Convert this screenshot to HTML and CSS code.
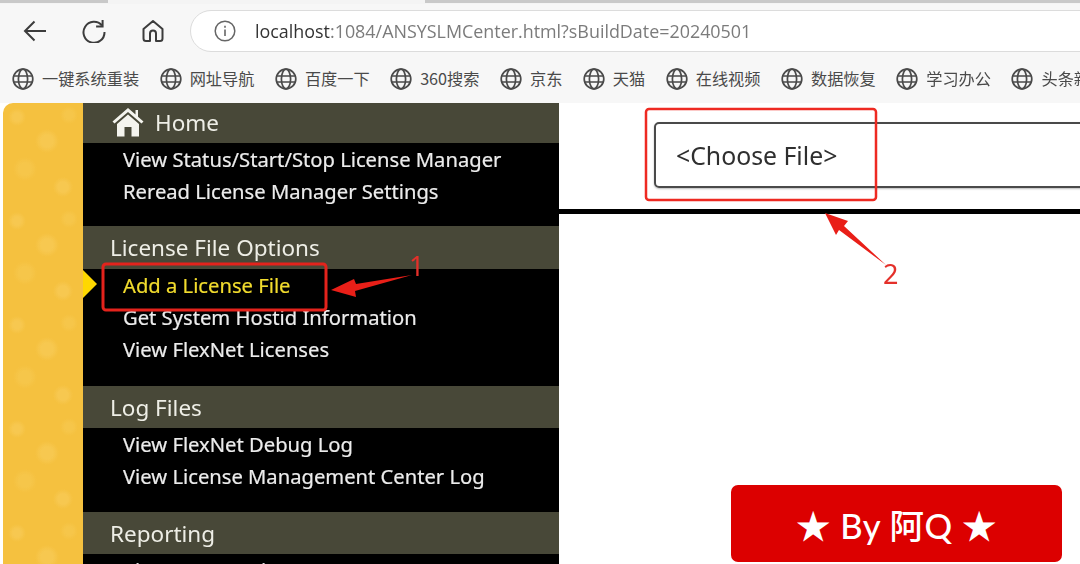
FILE: index.html
```html
<!DOCTYPE html>
<html lang="zh">
<head>
<meta charset="utf-8">
<title>ANSYS License Management Center</title>
<link rel="stylesheet" href="styles.css">
</head>
<body>
<svg class="defs" width="0" height="0" aria-hidden="true">
  <symbol id="globe" viewBox="0 0 22 22">
    <g fill="none" stroke="#4a4a4a" stroke-width="1.7">
      <circle cx="11" cy="11" r="9.8"/>
      <ellipse cx="11" cy="11" rx="4.6" ry="9.8"/>
      <path d="M1.6 8h18.8M1.6 14h18.8"/>
    </g>
  </symbol>
</svg>
<div class="page">
  <div class="tabs">
    <div class="tab tab-left"></div>
    <div class="tab tab-right"></div>
  </div>
  <div class="toolbar">
    <svg class="tool tool-back" viewBox="0 0 24 24" width="24" height="24"><path d="M23 12H2M11.500 2.500 2 12l9.500 9.500" fill="none" stroke="#3c3c3c" stroke-width="2"/></svg>
    <svg class="tool tool-reload" viewBox="0 0 24 24" width="24" height="24"><path d="M20 6.500A10.500 10.500 0 1 0 22.500 13" fill="none" stroke="#3c3c3c" stroke-width="2"/><path d="M20.600 1v6.500h-6.500" fill="none" stroke="#3c3c3c" stroke-width="2"/></svg>
    <svg class="tool tool-home" viewBox="0 0 24 24" width="24" height="24"><path d="M9 22H5a2.500 2.500 0 0 1-2.500-2.500V10L12 2l9.500 8v9.500A2.500 2.500 0 0 1 19 22h-4v-7.500a3 3 0 0 0-6 0z" fill="none" stroke="#3c3c3c" stroke-width="2" stroke-linejoin="round"/></svg>
    <div class="address">
      <svg class="info" viewBox="0 0 22 22" width="22" height="22"><circle cx="11" cy="11" r="9.800" fill="none" stroke="#666" stroke-width="1.500"/><path d="M11 9.500v6.500M11 5.800v2" stroke="#666" stroke-width="1.600"/></svg>
      <span class="url"><span class="host">localhost</span>:1084/ANSYSLMCenter.html?sBuildDate=20240501</span>
    </div>
  </div>
  <div class="bookmarks">
    <div class="bm"><svg class="bm-icon"><use href="#globe"/></svg><span class="bm-label">一键系统重装</span></div>
    <div class="bm"><svg class="bm-icon"><use href="#globe"/></svg><span class="bm-label">网址导航</span></div>
    <div class="bm"><svg class="bm-icon"><use href="#globe"/></svg><span class="bm-label">百度一下</span></div>
    <div class="bm"><svg class="bm-icon"><use href="#globe"/></svg><span class="bm-label">360搜索</span></div>
    <div class="bm"><svg class="bm-icon"><use href="#globe"/></svg><span class="bm-label">京东</span></div>
    <div class="bm"><svg class="bm-icon"><use href="#globe"/></svg><span class="bm-label">天猫</span></div>
    <div class="bm"><svg class="bm-icon"><use href="#globe"/></svg><span class="bm-label">在线视频</span></div>
    <div class="bm"><svg class="bm-icon"><use href="#globe"/></svg><span class="bm-label">数据恢复</span></div>
    <div class="bm"><svg class="bm-icon"><use href="#globe"/></svg><span class="bm-label">学习办公</span></div>
    <div class="bm"><svg class="bm-icon"><use href="#globe"/></svg><span class="bm-label">头条新闻</span></div>
  </div>
  <div class="main">
    <div class="strip"></div>
    <nav class="nav">
      <section class="sec sec-home">
        <div class="head head-home">
          <svg class="home-icon" viewBox="0 0 32 30" width="32" height="30"><path d="M16 1 0.500 14.500 2.500 16.500 16 5 29.500 16.500 31.500 14.500 26 9.700V3h-2.500v4.500z" fill="#f4f4ee"/><path d="M5 17 16 7.500 27 17v12.500h-7.500V20h-7v9.500H5z" fill="#f4f4ee"/></svg>
          <span>Home</span>
        </div>
        <a class="item">View Status/Start/Stop License Manager</a>
        <a class="item">Reread License Manager Settings</a>
      </section>
      <section class="sec sec-lic">
        <div class="head head-lic">License File Options</div>
        <a class="item current">Add a License File</a>
        <a class="item">Get System Hostid Information</a>
        <a class="item">View FlexNet Licenses</a>
      </section>
      <section class="sec sec-log">
        <div class="head head-log">Log Files</div>
        <a class="item">View FlexNet Debug Log</a>
        <a class="item">View License Management Center Log</a>
      </section>
      <section class="sec">
        <div class="head head-log">Reporting</div>
        <a class="item">View Current License Usage</a>
      </section>
    </nav>
    <div class="content">
      <div class="top-pane">
        <div class="file-box">&lt;Choose File&gt;</div>
      </div>
    </div>
  </div>
  <svg class="marks" viewBox="0 0 1080 564" width="1080" height="564">
    <polygon points="83,270 97,284 83,298" fill="#ffd800"/>
    <rect x="103" y="264" width="223" height="46" rx="3" fill="none" stroke="#e4231c" stroke-width="3"/>
    <rect x="646" y="109" width="230" height="91" rx="3" fill="none" stroke="#ee2a22" stroke-width="2.500"/>
    <path d="M412 275 356 284 354 279 331 290 356 297 355 291Z" fill="#e91f18"/>
    <path d="M886 265 844 226 848 221 825 213 836 235 839 230Z" fill="#e91f18"/>
    <text class="mark-num" x="409" y="276">1</text>
    <text class="mark-num" x="883" y="284">2</text>
  </svg>
  <div class="badge">★ By 阿Q ★</div>
</div>
</body>
</html>
```
FILE: styles.css
```css
* { box-sizing: border-box; }
html, body { margin: 0; height: 100%; background: #fff; overflow: hidden; }
.defs { position: absolute; }
.page {
  position: relative;
  width: 1080px;
  height: 564px;
  overflow: hidden;
  display: flex;
  flex-direction: column;
  font-family: "Noto Sans", "Noto Sans CJK SC", sans-serif;
}
.tabs {
  height: 4px;
  display: flex;
  justify-content: space-between;
  background: #f4f4f4;
}
.tab { height: 3px; background: #c9c9c9; }
.tab-left { width: 108px; }
.tab-right { width: 655px; }
.toolbar {
  height: 54px;
  padding: 6px 0 0 23px;
  background: #f7f7f7;
  display: flex;
  align-items: flex-start;
  filter: blur(0.4px);
}
.tool { flex: none; margin-top: 9px; }
.tool-reload { margin-left: 35px; }
.tool-home { margin-left: 35px; }
.address {
  flex: none;
  width: 960px;
  height: 42px;
  margin-left: 25px;
  padding-left: 23px;
  display: flex;
  align-items: center;
  background: #fff;
  border: 1px solid #dcdcdc;
  border-radius: 21px;
}
.info { flex: none; }
.url {
  margin-left: 19px;
  font-family: "Open Sans", sans-serif;
  font-size: 17.900px;
  color: #7b7b7b;
  white-space: nowrap;
}
.host { color: #333; }
.bookmarks {
  height: 45px;
  padding: 0 0 3px 12px;
  background: #f7f7f7;
  display: flex;
  align-items: center;
  gap: 20.500px;
  white-space: nowrap;
  color: #4a4a4a;
  font-size: 16.200px;
  font-family: "Noto Sans CJK SC", "Noto Sans", sans-serif;
  filter: blur(0.4px);
}
.bm { flex: none; display: flex; align-items: center; gap: 8px; }
.bm-icon { width: 22px; height: 22px; flex: none; }
.bm-label { display: block; line-height: 20px; padding-bottom: 3px; }
.main { flex: 1; display: flex; min-height: 0; padding-left: 3px; filter: blur(0.4px); }
.strip {
  flex: none;
  width: 80px;
  border-top-left-radius: 10px;
  background-color: #f5c13f;
  background-image:
    radial-gradient(circle at 14px 14px, #f7c850 4px, transparent 9px),
    radial-gradient(circle at 44px 38px, #f7c850 6px, transparent 12px),
    radial-gradient(circle at 66px 12px, #f6c64a 4px, transparent 9px),
    radial-gradient(circle at 22px 66px, #f6c64a 6px, transparent 12px),
    radial-gradient(circle at 60px 84px, #f7c850 5px, transparent 10px);
  background-size: 80px 104px;
}
.nav {
  flex: none;
  width: 476px;
  background: #000;
  color: #ececec;
  font-family: "Noto Sans", sans-serif;
}
.sec-home { height: 123px; }
.sec-lic { height: 160px; }
.sec-log { height: 126px; }
.head {
  padding-left: 27px;
  background: #484838;
  color: #eeeee6;
  font-size: 22.500px;
  display: flex;
  align-items: center;
}
.head-home { height: 40px; padding-left: 29px; gap: 11px; padding-bottom: 2px; }
.home-icon { flex: none; }
.head-lic { height: 43px; }
.head-log { height: 42px; }
.item {
  display: block;
  height: 32px;
  line-height: 32px;
  padding-left: 40px;
  font-size: 20.200px;
  white-space: nowrap;
  -webkit-text-stroke: 0.2px currentColor;
}
.current { color: #f2dc2e; }
.content { flex: 1; min-width: 0; background: #fff; }
.top-pane {
  height: 111px;
  padding: 19px 0 0 95px;
  border-bottom: 5px solid #000;
}
.file-box {
  width: 600px;
  height: 66px;
  padding-left: 20px;
  line-height: 62px;
  font-size: 24.800px;
  color: #2f2f2f;
  border: 2px solid #4a4a4a;
  border-radius: 5px;
  box-shadow: 0 1px 2px #bbb;
}
.marks { position: absolute; left: 0; top: 0; pointer-events: none; }
.mark-num { font-family: "Noto Sans", sans-serif; font-size: 27px; fill: #e4302a; }
.badge {
  position: absolute;
  left: 731px;
  top: 485px;
  width: 331px;
  height: 77px;
  display: flex;
  align-items: center;
  justify-content: center;
  background: #dc0000;
  border-radius: 7px;
  color: #fff;
  font-family: "Lato", "Noto Sans CJK SC", sans-serif;
  font-size: 34.500px;
  font-weight: 500;
  letter-spacing: 0.5px;
}
```
